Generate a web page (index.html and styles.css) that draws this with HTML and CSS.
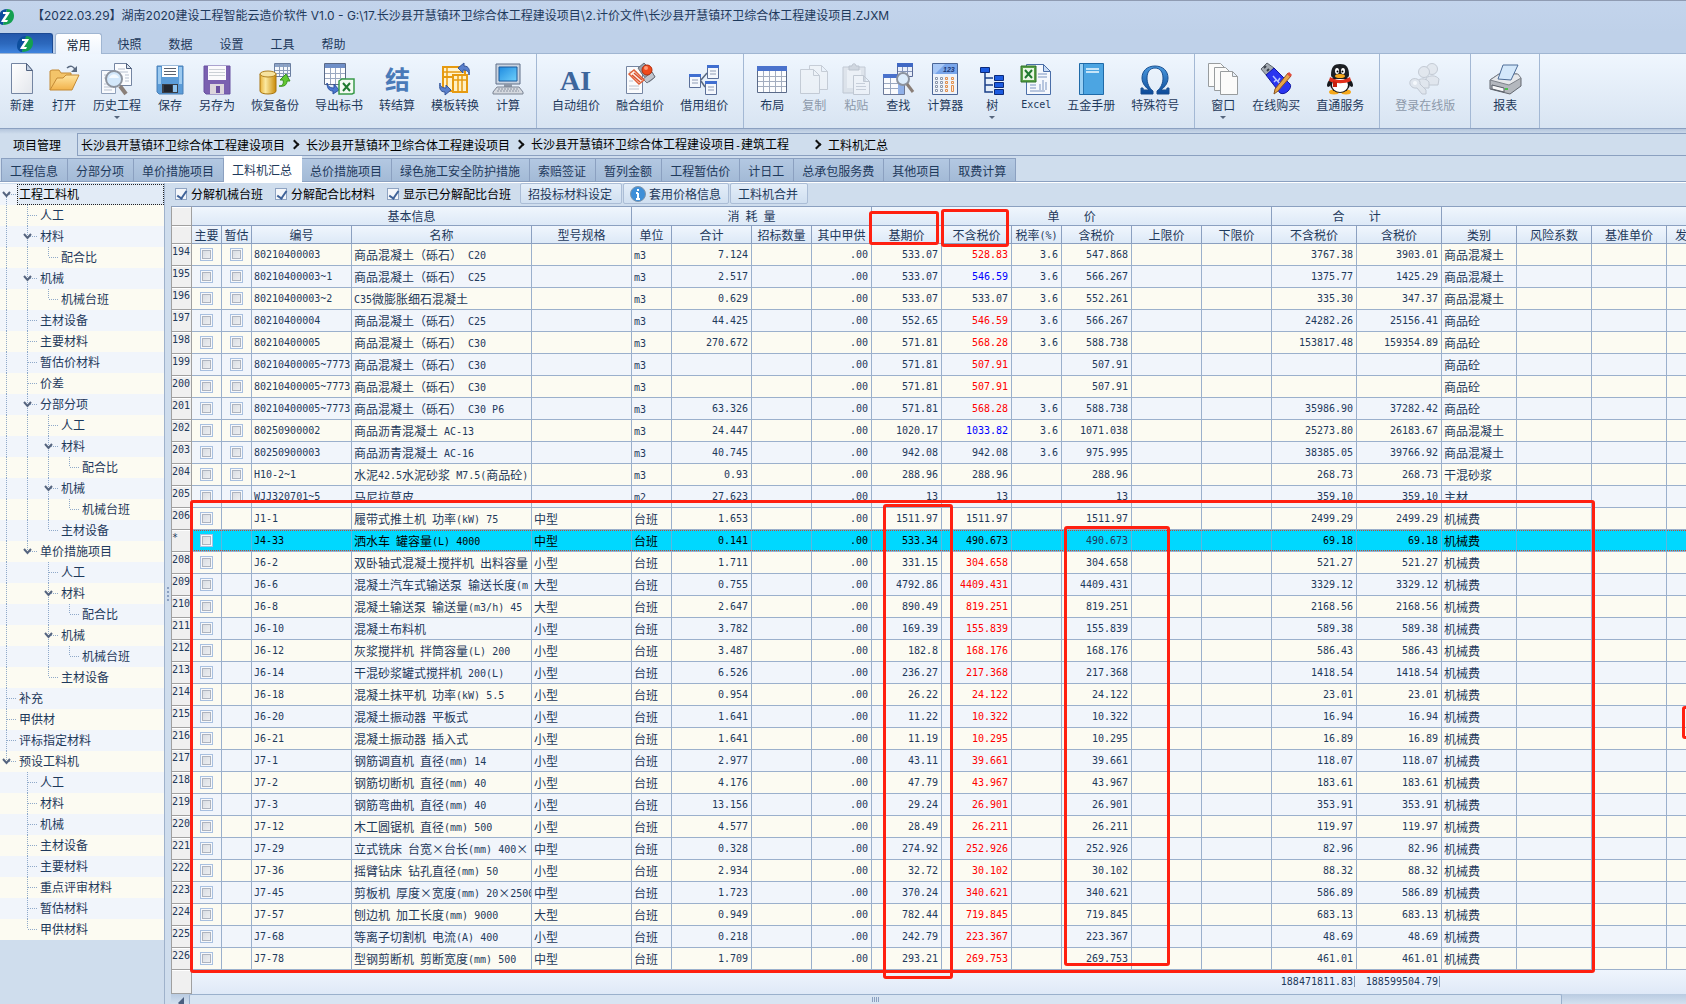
FILE: index.html
```html
<!DOCTYPE html>
<html lang="zh-CN">
<head>
  <meta charset="UTF-8">
  <title>湖南2020建设工程智能云造价软件 V1.0</title>
  <meta name="viewport" content="width=device-width, initial-scale=1.0">
  <link rel="stylesheet" href="styles.css">
</head>
<body>

  <svg class="defs" width="0" height="0">
    <defs>
      <linearGradient id="gBlue" x1="0" y1="0" x2="0" y2="1"><stop offset="0" stop-color="#4a9ae0"/><stop offset="1" stop-color="#0c4a98"/></linearGradient>
      <linearGradient id="gSky" x1="0" y1="0" x2="1" y2="1"><stop offset="0" stop-color="#1f8be0"/><stop offset="1" stop-color="#6fd0fb"/></linearGradient>
      <linearGradient id="gGold" x1="0" y1="0" x2="1" y2="0"><stop offset="0" stop-color="#e9b33a"/><stop offset=".35" stop-color="#fbe9a0"/><stop offset="1" stop-color="#c98a08"/></linearGradient>
      <linearGradient id="gPaper" x1="0" y1="0" x2="1" y2="1"><stop offset="0" stop-color="#fff"/><stop offset="1" stop-color="#e3e6ec"/></linearGradient>
      <linearGradient id="gFold" x1="0" y1="0" x2="0" y2="1"><stop offset="0" stop-color="#ffe5a0"/><stop offset="1" stop-color="#f2b24a"/></linearGradient>
      <symbol id="logo" viewBox="0 0 16 16">
        <path d="M9 0C3 0 0 5 0 10c0 4 3 6 5 6L9 0z" fill="#0d4f9e"/>
        <path d="M9 0c5 0 7 3 7 7 0 5-4 9-11 9L9 0z" fill="#14a050"/>
        <path d="M5 3h7l-1 2-4 6h3l-1 2H3l1-2 4-6H5z" fill="#fff"/>
      </symbol>
      <symbol id="xls" viewBox="0 0 16 16">
        <path d="M1 2h13v13H1z" fill="#f4fbf4" stroke="#3a9a4a" stroke-width="2"/>
        <path d="M4 5l6 7M10 5l-6 7" stroke="#1f7a30" stroke-width="2"/>
      </symbol>
      <symbol id="page" viewBox="0 0 20 24">
        <path d="M.5.5h13l6 6v17H.5z" fill="url(#gPaper)" stroke="#8d9ab0"/>
        <path d="M13.500.5v6h6z" fill="#dfe4ec" stroke="#8d9ab0"/>
      </symbol>
      <symbol id="chev" viewBox="0 0 9 7">
        <path d="M1 1l3.500 4L8 1" fill="none" stroke="#56657f" stroke-width="2"/>
      </symbol>
    </defs>
  </svg>

  <header class="titlebar">
    <svg class="title-logo"><use href="#logo"/></svg>
    <span class="title-text">【2022.03.29】湖南2020建设工程智能云造价软件 V1.0 - G:\17.长沙县开慧镇环卫综合体工程建设项目\2.计价文件\长沙县开慧镇环卫综合体工程建设项目.ZJXM</span>
  </header>

  <nav class="menu">
    <button class="app-btn"><svg width="16" height="16"><use href="#logo"/></svg></button>
    <button class="menu-tab active">常用</button>
    <button class="menu-tab">快照</button>
    <button class="menu-tab">数据</button>
    <button class="menu-tab">设置</button>
    <button class="menu-tab">工具</button>
    <button class="menu-tab">帮助</button>
  </nav>

  <div class="ribbon">
    <div class="group first">
      <button class="tool">
        <svg viewBox="0 0 32 32"><path d="M5.500.5h15l6 7v23h-21z" fill="url(#gPaper)" stroke="#7485a2"/><path d="M20.500.5v7h6z" fill="#c3d0e2" stroke="#50617e"/></svg>
        新建</button>
      <button class="tool">
        <svg viewBox="0 0 32 32"><path d="M2 27V8l2-1h7l2 3h10v5" fill="#f3c469" stroke="#c48a35"/><path d="M2 27L9 15h6l3-3h13l-7 15z" fill="url(#gFold)" stroke="#c48a35"/><path d="M19 5c3-3 7-2 8 2" fill="none" stroke="#5a6a80" stroke-width="1.500"/><path d="M29 3v6h-6z" fill="#5a6a80"/></svg>
        打开</button>
      <button class="tool">
        <svg viewBox="0 0 32 32"><path d="M13.500.5h12l5 5v17h-17z" fill="#fbfcfe" stroke="#7485a2"/><path d="M25.500.5v5h5z" fill="#dce4ef" stroke="#50617e"/><path d="M17 6h7M17 9h10M24 12h4M24 15h4M24 18h4" stroke="#b9c2d0"/><path d="M.5 7.500h14v23H.5z" fill="#f8fafd" stroke="#8fa0ba"/><path d="M3 12h3M3 15h3M3 21h4M3 24h8M3 27h8" stroke="#b9c2d0"/><circle cx="13" cy="16" r="8" fill="#d3e8fb" stroke="#8c939e" stroke-width="2"/><path d="M8 15c2-5 8-5 10 0z" fill="#f4faff"/><path d="M19 23l6 8" stroke="#8a7f78" stroke-width="4"/></svg>
        历史工程<i class="drop"></i></button>
      <button class="tool">
        <svg viewBox="0 0 32 32"><path d="M3 3h26v28H5l-2-2z" fill="#5b9cd8" stroke="#4a80b8"/><path d="M4 4h3v17H4zM25 4h3v17h-3z" fill="#9ccaf0"/><path d="M8 3h16v11H8z" fill="#fff"/><path d="M10 5.500h12M10 8.500h12M10 11.500h12" stroke="#5a626e"/><path d="M8 21h16v9H8z" fill="#3a3f48"/><path d="M10 22h8v7h-8z" fill="#22262e"/><path d="M19 22h4v7h-4z" fill="#8fc4ef"/></svg>
        保存</button>
      <button class="tool">
        <svg viewBox="0 0 32 32"><path d="M3 3h26v28H5l-2-2z" fill="#7a60b0" stroke="#6850a0"/><path d="M7 3h18v14H7z" fill="#fbfafc"/><path d="M8 6.500h16M8 9.500h16M8 12.500h16" stroke="#ccd0d6"/><path d="M9 21h14v10H9z" fill="#dcd6dc"/><path d="M15 23h4v7h-4z" fill="#6a50a0"/></svg>
        另存为</button>
      <button class="tool">
        <svg viewBox="0 0 32 32"><path d="M15.500.5h16v13h-16z" fill="#f5f8fc" stroke="#6a7ea0"/><path d="M16 1h15v3H16z" fill="#8ba3c8"/><path d="M16 7.500h15M16 10.500h15M20.500 1v12M24.500 1v12M28.500 1v12" stroke="#8b9cb8"/><path d="M1 11v17c0 4 16 4 16 0V11z" fill="url(#gGold)" stroke="#a87510"/><ellipse cx="9" cy="11" rx="8" ry="3" fill="#f6e3a0" stroke="#b08020"/><path d="M20 23c4 0 5-3 4-6h-3l6-6 4 7h-3c0 4-3 6-8 5z" fill="#62c832" stroke="#38901c"/></svg>
        恢复备份</button>
      <button class="tool">
        <svg viewBox="0 0 32 32"><path d="M1.500.5h21v21h-21z" fill="#fdfdfe" stroke="#5a6a88"/><path d="M2 1h20v4H2z" fill="#6f8fc8"/><path d="M2 10.500h20M2 15.500h20M7.500 5v16M12.500 5v16M17.500 5v16" stroke="#9aa8c0"/><path d="M4 20c1 4 4 5 7 5v-4l5 6-6 4v-3c-4 0-6-3-6-8z" fill="#4a78d0" stroke="#2c50a0"/><path d="M16 18l3-2h12v14l-2 1H16z" fill="#f3faf3" stroke="#3a9a4a" stroke-width="1.500"/><path d="M20 20l7 8M27 20l-7 8" stroke="#1f7a30" stroke-width="2"/></svg>
        导出标书</button>
      <button class="tool">
        <svg viewBox="0 0 32 32"><text x="4" y="26" class="serif-cn">结</text></svg>
        转结算</button>
      <button class="tool">
        <svg viewBox="0 0 32 32"><path d="M4 4h22v10H4zM4 14h10v14H4z" fill="#fff3cf" stroke="#e69a10" stroke-width="2"/><path d="M8 4v22M4 9h20" stroke="#e69a10" stroke-width="1.500"/><path d="M14 12h14v17H14z" fill="#fff0c4" stroke="#e69a10" stroke-width="2"/><path d="M19 12v17M23 12v17M14 17h14" stroke="#e69a10" stroke-width="1.500"/><path d="M30 12c0-4-3-5-6-5v3l-5-5 6-5v3c5 0 6 4 5 9z" fill="#5a80cc" stroke="#34559c"/><path d="M1 20c0 4 3 5 6 5v-3l5 5-6 5v-3c-5 0-6-4-5-9z" fill="#5a80cc" stroke="#34559c"/></svg>
        模板转换</button>
      <button class="tool">
        <svg viewBox="0 0 32 32"><path d="M4 1h24v20H4z" fill="#c9d3e0" stroke="#5f6f88"/><path d="M7 4h18v14H7z" fill="url(#gSky)" stroke="#1c5a9c"/><path d="M12 21h8v3h-8z" fill="#8d97a6"/><path d="M5 24h22l4 5v2H1v-2z" fill="#d5d9df" stroke="#7b8494"/><path d="M6 26h20M5 28h22" stroke="#8a92a0" stroke-dasharray="2 1"/></svg>
        计算</button>
    </div>
    <div class="group">
      <button class="tool"><svg viewBox="0 0 32 32"><text x="0" y="27" class="serif-ai">AI</text></svg>自动组价</button>
      <button class="tool">
        <svg viewBox="0 0 32 32"><path d="M2.500 3.500h16v27h-16z" fill="#fafbfd" stroke="#7485a2"/><path d="M5 9h8M5 23h10M5 26h10M5 18h4" stroke="#bcc4d0"/><path d="M14 5l6-5 5 5 6 9-6 5-7-8z" fill="#9aa0aa" stroke="#6b717c"/><path d="M19 16l9-7 3 5-8 6z" fill="#c0c5ce" stroke="#6d737e"/><path d="M5 11l5-4 10 10-5 4z" fill="#fbeee8" stroke="#e06038" stroke-width="1.500"/><path d="M8 12l8 7M10 10l8 7" stroke="#d9502c" stroke-width="1.500"/><circle cx="23" cy="7" r="5" fill="#ef4a1c" stroke="#b22c0a"/><circle cx="22" cy="5" r="2" fill="#ff9a78"/></svg>
        融合组价</button>
      <button class="tool">
        <svg viewBox="0 0 32 32"><g fill="#f4f7fc" stroke="#5b6f98"><path d="M1.500 11.500h11v13h-11zM19.500 2.500h11v13h-11zM17.500 18.500h11v13h-11z"/></g><path d="M1 11h12v3H1zM19 2h12v3H19zM17 18h12v3H17z" fill="#3f6ed0"/><path d="M4 17h6M4 20h6M22 8h6M22 11h6M20 24h6M20 27h6" stroke="#8f9cb5"/><path d="M13 17l6-7M13 18l4 6" stroke="#58677f" stroke-width="1.500"/></svg>
        借用组价</button>
    </div>
    <div class="group">
      <button class="tool">
        <svg viewBox="0 0 32 32"><path d="M1.500 3.500h29v26h-29z" fill="#fcfdfe" stroke="#5a6a88"/><path d="M1 3h30v5H1z" fill="#4a72cc"/><path d="M2 13.500h28M2 18.500h28M2 23.500h28M7.500 8v21M13.500 8v21M19.500 8v21M25.500 8v21" stroke="#a3adbf"/></svg>
        布局</button>
      <button class="tool" disabled>
        <svg viewBox="0 0 32 32" opacity=".5"><g fill="#f1f3f6" stroke="#a3a9b3"><path d="M11.500 2.500h12l6 6v18h-18zM23.500 2.500v6h6"/><path d="M2.500 6.500h13l6 6v18h-19zM15.500 6.500v6h6"/></g></svg>
        复制</button>
      <button class="tool" disabled>
        <svg viewBox="0 0 32 32" opacity=".5"><path d="M3 4h22v26H3z" fill="#d4d8de" stroke="#9ba2ae"/><path d="M7 7h14v18H7z" fill="#eef0f3"/><path d="M9 3h3c0-3 4-3 4 0h3v4H9z" fill="#b6bcc6" stroke="#8f96a2"/><path d="M13.500 12.500h10l6 6v13h-16zM23.500 12.500v6h6" fill="#f4f5f8" stroke="#9ba2ae"/><path d="M16 20.500h9M16 23.500h10M16 26.500h10" stroke="#a9b0bc"/></svg>
        粘贴</button>
      <button class="tool">
        <svg viewBox="0 0 32 32"><path d="M15.500.5h15v13h-15z" fill="#e9effa" stroke="#5a6a98"/><path d="M15 0h16v4H15z" fill="#3f68c4"/><path d="M20.500 4v9M25.500 4v9M16 8.500h14" stroke="#8595b8"/><path d="M1.500 11.500h21v20h-21z" fill="#fafbfd" stroke="#6a7898"/><path d="M1 11h15v4H1z" fill="#4a72cc"/><path d="M16 14h6v17h-6z" fill="#8fb0e8"/><path d="M2 20.500h14M2 25.500h14M8.500 15v16" stroke="#9aa8c0"/><circle cx="21" cy="16" r="6" fill="#dcecfb" stroke="#8c939e" stroke-width="2"/><path d="M25 21l6 8" stroke="#8a7f78" stroke-width="3"/></svg>
        查找</button>
      <button class="tool">
        <svg viewBox="0 0 32 32"><path d="M3.500.5h25v31h-25z" fill="#eef3fa" stroke="#4a6698"/><path d="M4 1h24v10H4z" fill="#7aa6ea"/><path d="M4 1h12L6 11H4z" fill="#a8c8f6"/><text x="14" y="9" class="calc">123</text><g fill="#fff" stroke="#8a96aa"><path d="M6.500 14.500h2v2h-2zM11.500 14.500h2v2h-2zM6.500 18.500h2v2h-2zM11.500 18.500h2v2h-2zM6.500 22.500h2v2h-2zM11.500 22.500h2v2h-2zM6.500 26.500h2v2h-2zM11.500 26.500h2v2h-2z"/></g><g fill="#ffe9d8" stroke="#e09050"><path d="M16.500 14.500h2v2h-2zM22.500 14.500h2v2h-2zM16.500 18.500h2v2h-2zM22.500 18.500h2v2h-2zM16.500 22.500h2v2h-2zM16.500 26.500h2v2h-2zM22.500 22.500h2v6h-2z"/></g></svg>
        计算器</button>
      <button class="tool">
        <svg viewBox="0 0 32 32"><path d="M9 9v20h8M9 15h8M9 22h8" fill="none" stroke="#1a3f88" stroke-width="1.500"/><g fill="#1c5be0" stroke="#0c2a78"><path d="M4.500 4.500h9v5h-9zM18.500 12.500h9v5h-9zM18.500 19.500h9v5h-9zM18.500 26.500h9v5h-9z"/></g></svg>
        树<i class="drop"></i></button>
      <button class="tool">
        <svg viewBox="0 0 32 32"><path d="M6.500 1.500h17l7 7v23h-24z" fill="#f5f8fd" stroke="#4a6ea8"/><path d="M23.500 1.500v7h7z" fill="#c9dcf5" stroke="#4a6ea8"/><path d="M18 11h9M18 14h9M10 22h6M10 25h6M10 28h15M20 27v-6M23 27V17M26 27v-8" stroke="#7a94c0"/><path d="M1 3h15v16H1z" fill="#58a048" stroke="#2c7024"/><path d="M3 5h11v12H3z" fill="#e9f6e4"/><path d="M5 7l7 8M12 7l-7 8" stroke="#1f7a30" stroke-width="2"/></svg>
        <span class="lat">Excel</span></button>
      <button class="tool">
        <svg viewBox="0 0 32 32"><path d="M4.500.5h24v31h-24z" fill="#4ca5e2" stroke="#1f6aa8"/><path d="M5 1h3v30H5z" fill="#9ad0f4"/><path d="M8.500 1v30" stroke="#2a78b4"/><path d="M11 6h13M11 9h13" stroke="#f0faff" stroke-width="1.500"/></svg>
        五金手册</button>
      <button class="tool">
        <svg viewBox="0 0 32 32"><path d="M2 31v-6h2c0 2 1 2 3 2h3C5 23 3 19 3 15 3 8 8 3 16 3s13 5 13 12c0 4-2 8-7 12h3c2 0 3 0 3-2h2v6H18v-3c4-3 6-8 6-13 0-6-3-10-8-10s-8 4-8 10c0 5 2 10 6 13v3z" fill="url(#gBlue)" stroke="#1a4f90"/></svg>
        特殊符号</button>
    </div>
    <div class="group">
      <button class="tool">
        <svg viewBox="0 0 32 32"><g fill="#fbfbfa" stroke="#989c9e"><path d="M1.500.5h12l5 5v18h-17z"/><path d="M7.500 4.500h11l6 6v17h-17z"/><path d="M13.500 8.500h12l5 5v18h-17zM25.500 8.500v5h5"/></g></svg>
        窗口<i class="drop"></i></button>
      <button class="tool">
        <svg viewBox="0 0 32 32"><path d="M1 6l6-6 7 5-7 8z" fill="#a3aab2" stroke="#5b626c"/><path d="M4 5l2-2M7 8l2-2" stroke="#3b424c" stroke-width="2"/><path d="M6 12l8-7 16 16c3 4-5 12-10 9z" fill="#2a35f0" stroke="#1218a0"/><path d="M13 13l8 9M14 19l2-2M20 15l-2 3" stroke="#b8c4ff" stroke-width="1.500"/><path d="M14 31l1-5L28 10l3 3-13 15z" fill="#e8a54a" stroke="#8a5420"/><path d="M28 10l3 3" stroke="#e24c3c" stroke-width="3"/></svg>
        在线购买</button>
      <button class="tool">
        <svg viewBox="0 0 32 32"><path d="M7 15c-4 4-5 8-3 9 2 0 3-3 3-3zM25 15c4 4 5 8 3 9-2 0-3-3-3-3z" fill="#16181c"/><ellipse cx="10" cy="29" rx="5" ry="2.500" fill="#f5a81c"/><ellipse cx="22" cy="29" rx="5" ry="2.500" fill="#f5a81c"/><ellipse cx="16" cy="21" rx="10" ry="9" fill="#16181c"/><ellipse cx="16" cy="22" rx="8" ry="7" fill="#fff"/><path d="M7 12C7 4 10 1 16 1s9 3 9 11c0 2-2 4-9 4s-9-2-9-4z" fill="#1c1f24"/><ellipse cx="13" cy="8" rx="2" ry="3" fill="#fff"/><ellipse cx="19" cy="8" rx="2" ry="3" fill="#fff"/><circle cx="13.500" cy="8.500" r="1"/><circle cx="18.500" cy="8.500" r="1"/><ellipse cx="16" cy="13" rx="5" ry="2" fill="#f7a91c"/><path d="M6 14c6 4 14 4 20 0l1 4c-6 3-16 3-22 0z" fill="#e3301c"/><path d="M9 18l4 1v5H9z" fill="#c9200f"/></svg>
        直通服务</button>
    </div>
    <div class="group">
      <button class="tool" disabled>
        <svg viewBox="0 0 32 32" opacity=".6"><g fill="#dde1e7" stroke="#aab0ba"><path d="M17 15c4-3 10-3 13 1l-1 6H18z"/><circle cx="23" cy="6" r="5.500"/><path d="M8 18c3-3 9-3 12 1v6H9z"/><circle cx="15" cy="9" r="5.500"/><path d="M2 17c3-3 10-1 9 4l6 6v4h-4l-5-6c-6 1-9-5-6-8z"/></g><circle cx="6" cy="20" r="2" fill="#fff"/></svg>
        登录在线版</button>
    </div>
    <div class="group">
      <button class="tool wide">
        <svg viewBox="0 0 32 32"><path d="M1 17l9-6h18l4 4v8l-11 8L1 26z" fill="#b4b8be" stroke="#62676f"/><path d="M1 17l19 5 12-7-3-4H10z" fill="#e6e8eb" stroke="#7d828a"/><path d="M9 16l5-14 15 0-7 15z" fill="#d4e8fb" stroke="#4c6c98"/><path d="M3 22l12 3v4L3 26z" fill="#f8f9fa" stroke="#555b64"/><path d="M16 25h3v2h-3z" fill="#4cc050"/></svg>
        报表</button>
    </div>
  </div>

  <div class="crumb-row">
    <span class="crumb-label">项目管理</span>
    <nav class="crumbs">
      <a href="#">长沙县开慧镇环卫综合体工程建设项目</a><i class="arrow"></i>
      <a href="#">长沙县开慧镇环卫综合体工程建设项目</a><i class="arrow"></i>
      <a href="#" class="gap">长沙县开慧镇环卫综合体工程建设项目<span class="lat">-</span>建筑工程</a><i class="arrow"></i>
      <a href="#">工料机汇总</a>
    </nav>
  </div>

  <nav class="tabs">
    <button>工程信息</button><button>分部分项</button><button>单价措施项目</button><button class="active">工料机汇总</button><button>总价措施项目</button><button>绿色施工安全防护措施</button><button>索赔签证</button><button>暂列金额</button><button>工程暂估价</button><button>计日工</button><button>总承包服务费</button><button>其他项目</button><button>取费计算</button>
  </nav>

  <main class="main">
    <aside class="side"><div class="tree" id="tree"></div></aside>
    <div class="splitter"><i></i></div>

    <section class="content">
      <div class="toolbar">
        <label><input type="checkbox" checked>分解机械台班</label>
        <label><input type="checkbox" checked>分解配合比材料</label>
        <label><input type="checkbox" checked>显示已分解配比台班</label>
        <div class="btns">
          <button>招投标材料设定</button>
          <button class="with-icon"><svg width="16" height="16" viewBox="0 0 16 16"><circle cx="8" cy="8" r="7.500" fill="#3f8fd8" stroke="#7d94ac"/><path d="M8 3v2M8 7v6M6 7h2M6 13h4" stroke="#fff" stroke-width="2"/></svg>套用价格信息</button>
          <button>工料机合并</button>
        </div>
      </div>

      <div class="sheet">
        <table>
          <colgroup id="cols"></colgroup>
          <thead>
            <tr>
              <th class="idx"></th>
              <th colspan="5">基本信息</th>
              <th colspan="4">消<span class="lat"> </span>耗<span class="lat"> </span>量</th>
              <th colspan="6">单<span class="lat">    </span>价</th>
              <th colspan="2">合<span class="lat">    </span>计</th>
              <th colspan="4"></th>
            </tr>
            <tr id="heads"></tr>
          </thead>
          <tbody id="rows"></tbody>
          <tfoot>
            <tr>
              <td class="idx"></td>
              <td colspan="15"></td>
              <td class="num"><span class="sum">188471811.83</span></td>
              <td class="num"><span class="sum">188599504.79</span></td>
              <td colspan="4"></td>
            </tr>
          </tfoot>
        </table>

        <!-- 红框标注 -->
        <div class="mark m-base"></div>
        <div class="mark m-net"></div>
        <div class="mark m-rows"></div>
        <div class="mark m-basecol"></div>
        <div class="mark m-taxcol"></div>
        <div class="mark m-edge"></div>
      </div>
      <div class="hscroll"><i class="left"></i><div class="thumb"><i></i></div></div>
    </section>
  </main>

  <script src="script.js"></script>
</body>
</html>
```

FILE: styles.css
```css
* {
  box-sizing: border-box;
}

body {
  margin: 0;
  height: 100vh;
  display: flex;
  flex-direction: column;
  overflow: hidden;
  background: #cfdded;
  color: #1e395b;
  font: 12px/14px "Noto Sans CJK SC", sans-serif;
}

button {
  font: inherit;
  color: inherit;
  margin: 0;
  padding: 0;
  border: 0;
  background: none;
  white-space: nowrap;
}

.defs {
  position: absolute;
}

/* 半角字符 */
.lat,
.num {
  font-family: "DejaVu Sans Mono", monospace;
  font-size: 10px;
  white-space: pre;
}

/* 标题栏 */
.titlebar {
  flex: none;
  height: 32px;
  display: flex;
  align-items: center;
  border-top: 1px solid #8f9bb2;
  background: linear-gradient(#c3d4ec, #bfd1e9);
}

.title-logo {
  width: 16px;
  height: 16px;
  margin-left: -2px;
}

.title-text {
  margin-left: 18px;
  padding-bottom: 2px;
  font-family: Inter, "Noto Sans CJK SC", sans-serif;
  white-space: nowrap;
}

.menu {
  flex: none;
  height: 22px;
  display: flex;
  padding-top: 1px;
  background: #bfd1e9;
  border-bottom: 1px solid #a0b6d2;
}

.app-btn {
  width: 53px;
  margin-right: 2px;
  border: 1px solid #1c4a94;
  border-left: 0;
  border-bottom: 0;
  border-radius: 0 3px 0 0;
  background: linear-gradient(#2458ac, #2c68bc 50%, #3f84de);
}

.app-btn svg {
  display: block;
  margin: 1px auto 0 17px;
}

.menu-tab {
  width: 51px;
  padding-top: 1px;
}

.menu-tab.active {
  width: 47px;
  height: 21px;
  margin-right: 2px;
  border: 1px solid #a0b6d2;
  border-bottom: 0;
  border-radius: 3px 3px 0 0;
  background: linear-gradient(#fff, #eef5fd);
  color: #0c1c34;
}

/* 功能区 */
.ribbon {
  flex: none;
  height: 75px;
  display: flex;
  background: linear-gradient(#eff6fe, #d8e4f2);
  border-bottom: 1px solid #8ba0c0;
}

.group {
  display: flex;
  padding: 0 7px;
  border-right: 1px solid #a3b8d4;
}

.group.first {
  padding-left: 1px;
}

.tool {
  display: flex;
  flex-direction: column;
  align-items: center;
  min-width: 42px;
  padding: 9px 8px 0;
}

.tool.wide {
  min-width: 54px;
}

.tool svg {
  width: 32px;
  height: 32px;
  margin: 0 -8px 3px;
  overflow: visible;
}

.tool:disabled {
  color: #8d99aa;
}

.drop {
  margin-top: 4px;
  border: 3px solid transparent;
  border-top-color: #55657c;
  border-bottom: 0;
}

.serif-cn {
  font: bold 25px "Noto Sans CJK SC", sans-serif;
  fill: #4a7ab8;
}

.serif-ai {
  font: bold 28px "Liberation Serif", serif;
  fill: #3d669c;
}

.calc {
  font: italic bold 7px "Liberation Sans", sans-serif;
  fill: #1c3a78;
}

/* 导航路径 */
.crumb-row {
  flex: none;
  height: 27px;
  padding-top: 4px;
  display: flex;
  color: #000;
  background: linear-gradient(#b4c5dc, #cfdded 5px);
}

.crumb-label {
  width: 77px;
  padding-left: 13px;
  line-height: 24px;
}

.crumbs {
  flex: 1;
  display: flex;
  align-items: center;
  height: 23px;
  padding-left: 3px;
  border: 1px solid #8ba0c0;
  border-right: 0;
  background: #cfdded;
  white-space: nowrap;
}

.crumbs a {
  color: #000;
  text-decoration: none;
}

.crumbs .gap {
  padding-right: 18px;
}

.arrow {
  width: 7px;
  height: 7px;
  margin: 0 8px 0 6px;
  border: 1px solid #111;
  border-width: 2px 2px 0 0;
  transform: rotate(45deg);
}

.tabs {
  flex: none;
  height: 27px;
  display: flex;
  align-items: flex-end;
  padding-left: 1px;
  border-bottom: 1px solid #fff;
  box-shadow: inset 0 -1px #8ba0c0;
}

.tabs button {
  height: 24px;
  padding: 1px 9px 0 8px;
  border: 1px solid #8ba0c0;
  border-width: 1px 1px 1px 0;
  background: linear-gradient(#b3c8e2, #a3bad6);
}

.tabs button:first-child {
  border-left-width: 1px;
}

.tabs .active {
  height: 26px;
  background: #fff;
  border-color: #fff;
}

/* 主体 */
.main {
  flex: 1;
  min-height: 0;
  display: flex;
}

.side {
  flex: none;
  width: 165px;
  padding-top: 1px;
  border-right: 1px solid #9fb2cb;
  overflow: hidden;
}

.tree {
  background: repeating-linear-gradient(#f1f5fb 0 21px, #fcfbf2 21px 42px);
}

.node {
  display: flex;
  height: 21px;
  margin-left: -4px;
  line-height: 20px;
}

.guide {
  --v: repeating-linear-gradient(#8fa9c9 0 1px, transparent 1px 2px);
  --h: repeating-linear-gradient(90deg, #8fa9c9 0 1px, transparent 1px 2px);
  width: 21px;
  padding: 7px 0 0 6px;
  background-repeat: no-repeat;
}

.guide.line {
  background-image: var(--v);
  background-position: 10px 0;
  background-size: 1px 100%;
}

.guide.tee,
.guide.elbow,
.guide.top {
  background-image: var(--v), var(--h);
  background-position: 10px 0, 11px 10px;
  background-size: 1px 100%, 9px 1px;
}

.guide.elbow {
  background-size: 1px 10px, 9px 1px;
}

.guide.top {
  background-position: 10px 11px, 11px 10px;
}

.guide button,
.guide svg {
  display: block;
  width: 9px;
  height: 7px;
}

.node .name {
  padding-left: 2px;
  white-space: nowrap;
}

.node.selected .name {
  flex: 1;
  line-height: 18px;
  padding-left: 1px;
  border: 1px dotted #222;
  background: #e2ebf6;
  color: #000;
}

.splitter {
  flex: none;
  width: 6px;
  display: flex;
  align-items: center;
  justify-content: center;
}

.splitter i {
  width: 2px;
  height: 14px;
  background: repeating-linear-gradient(#8ba0c0 0 2px, transparent 2px 4px);
}

.content {
  flex: 1;
  min-width: 0;
  display: flex;
  flex-direction: column;
}

.toolbar {
  flex: none;
  height: 23px;
  display: flex;
  align-items: center;
  padding: 0 0 2px 4px;
  color: #000;
}

.toolbar label {
  display: flex;
  align-items: center;
  gap: 4px;
  margin-right: 12px;
}

.toolbar label:last-of-type {
  margin-right: 9px;
}

input[type=checkbox] {
  appearance: none;
  display: block;
  width: 13px;
  height: 13px;
  margin: 0 auto;
  border: 1px solid #a8c0e0;
  background: linear-gradient(135deg, #d5d9df, #f2f3f5);
  box-shadow: inset 0 0 0 1px #f8f9fb, inset 0 0 0 2px #aeb4bf;
}

.toolbar input {
  width: 12px;
  height: 12px;
  background: #f4f6fa;
  box-shadow: none;
  border-color: #8ea3c2;
}

.toolbar input::before {
  content: "";
  display: block;
  width: 4px;
  height: 8px;
  margin: 0 0 0 3px;
  border: 2px solid #3f6298;
  border-width: 0 2px 2px 0;
  transform: rotate(35deg);
}

.btns {
  display: flex;
  gap: 1px;
}

.btns button {
  height: 21px;
  display: flex;
  align-items: center;
  gap: 4px;
  padding: 0 9px 0 7px;
  border: 1px solid #abbdd6;
  border-radius: 2px;
  background: linear-gradient(#e4eef9, #d0dff0);
  color: #1e395b;
}

.btns .with-icon {
  gap: 3px;
  padding: 0 7px 0 6px;
}

/* 表格 */
.sheet {
  flex: 1;
  min-height: 0;
  position: relative;
  overflow: hidden;
}

table {
  width: 1572px;
  table-layout: fixed;
  border-collapse: separate;
  border-spacing: 0;
}

th,
td {
  padding: 0 3px 0 2px;
  border-right: 1px solid #9bb0cc;
  border-bottom: 1px solid #9bb0cc;
  overflow: hidden;
  white-space: nowrap;
}

th {
  height: 18px;
  padding: 0;
  line-height: 14px;
  font-weight: normal;
  background: linear-gradient(#f0f6fd, #dde9f7);
  border-color: #8ba0c0;
}

thead tr:first-child th {
  height: 20px;
  border-top: 1px solid #8ba0c0;
}

thead tr + tr th:last-child {
  padding-left: 8px;
  text-align: left;
}

td {
  height: 22px;
  line-height: 18px;
}

tbody tr {
  background: #f1f5fb;
}

tbody tr:nth-child(odd) {
  background: #fcfbf2;
}

td.num {
  text-align: right;
}

td.code {
  text-align: left;
}

td .lat,
th .lat {
  line-height: 12px;
  vertical-align: 1px;
}

tr .idx {
  padding: 0;
  border: 1px solid #a0a0a0;
  border-top: 0;
  background: #f0f0f0;
  box-shadow: inset 0 1px #fff;
}

tbody .idx {
  padding-top: 2px;
  line-height: 12px;
  text-align: left;
  vertical-align: top;
}

.red {
  color: #f00;
}

.blue {
  color: #00f;
}

tbody tr.current {
  background: #00d8ff;
  color: #000;
}

.current td:not(.idx) {
  border-right-color: #5fb6dd;
  background: repeating-linear-gradient(90deg, #d04030 0 1px, transparent 1px 2px) 0 0 / 100% 1px no-repeat,
    repeating-linear-gradient(90deg, #d04030 0 1px, transparent 1px 2px) 0 100% / 100% 1px no-repeat;
}

.current .idx,
.current .gross {
  color: #1e395b;
}

tfoot td {
  height: 24px;
  border: 0;
  background: linear-gradient(#eff5fd, #dfe9f7);
}

tfoot td.num {
  padding-right: 2px;
}

tfoot .sum {
  padding-right: 1px;
  border-right: 1px solid #7f93b0;
}

.mark {
  position: absolute;
  border: 3px solid #ff2010;
  border-radius: 3px;
}

.m-base { left: 698px; top: 5px; width: 70px; height: 34px; }
.m-net { left: 770px; top: 3px; width: 68px; height: 38px; }
.m-rows { left: 19px; top: 294px; width: 1405px; height: 473px; }
.m-basecol { left: 712px; top: 298px; width: 70px; height: 475px; }
.m-taxcol { left: 893px; top: 320px; width: 106px; height: 440px; }
.m-edge { left: 1511px; top: 500px; width: 40px; height: 33px; }

.hscroll {
  flex: none;
  height: 10px;
  display: flex;
  background: linear-gradient(#b9cbe1, #d3e0ef);
}

.hscroll .left {
  margin: 3px 5px 0 7px;
  border: 6px solid transparent;
  border-right-color: #4a5f80;
  border-left: 0;
}

.thumb {
  flex: none;
  width: 90.6%;
  display: flex;
  justify-content: center;
  align-items: center;
  border: 1px solid #9ab0cc;
  border-bottom: 0;
  border-radius: 2px 2px 0 0;
  background: #d8e4f2;
}

.thumb i {
  width: 7px;
  height: 5px;
  background: repeating-linear-gradient(90deg, #8ba0c0 0 1px, transparent 1px 2px);
}
```

FILE: script.js
```js
// 层级 名称，+ 表示可展开
const treeData = `0+工程工料机
1 人工
1+材料
2 配合比
1+机械
2 机械台班
1 主材设备
1 主要材料
1 暂估价材料
1 价差
1+分部分项
2 人工
2+材料
3 配合比
2+机械
3 机械台班
2 主材设备
1+单价措施项目
2 人工
2+材料
3 配合比
2+机械
3 机械台班
2 主材设备
0 补充
0 甲供材
0 评标指定材料
0+预设工料机
1 人工
1 材料
1 机械
1 主材设备
1 主要材料
1 重点评审材料
1 暂估材料
1 甲供材料`.split('\n').map(s => ({ level: +s[0], open: s[1] === '+', name: s.slice(2) }));

function hasNext(i, level) {
  for (let j = i + 1; j < treeData.length; j++) {
    if (treeData[j].level < level) return false;
    if (treeData[j].level === level) return true;
  }
  return false;
}

document.getElementById('tree').innerHTML = treeData.map((n, i) => {
  let html = '';
  for (let k = 0; k < n.level; k++) {
    html += `<span class="guide ${hasNext(i, k) ? 'line' : ''}"></span>`;
  }
  const kind = i === 0 ? 'top' : hasNext(i, n.level) ? 'tee' : 'elbow';
  const toggle = n.open ? '<button><svg><use href="#chev"/></svg></button>' : '';
  html += `<span class="guide ${kind}">${toggle}</span><span class="name">${n.name}</span>`;
  return `<div class="node ${i === 0 ? 'selected' : ''}">${html}</div>`;
}).join('');

const heads = ['主要', '暂估', '编号', '名称', '型号规格', '单位', '合计', '招标数量', '其中甲供', '基期价', '不含税价', '税率(%)', '含税价', '上限价', '下限价', '不含税价', '含税价', '类别', '风险系数', '基准单价', '发'];
const widths = [21, 30, 30, 100, 180, 100, 40, 80, 60, 60, 70, 70, 50, 70, 70, 70, 85, 85, 75, 75, 75, 76];

// 半角部分用等宽字体
const mix = s => s.replace(/[\x20-\x7e]+/g, m => `<span class="lat">${m}</span>`);

document.getElementById('cols').innerHTML = widths.map(w => `<col style="width:${w}px">`).join('');
document.getElementById('heads').innerHTML = '<th class="idx"></th>' + heads.map(h => `<th>${mix(h)}</th>`).join('');

// 序号|编号|名称|型号|单位|合计|基期价|不含税价|税率|含税价|不含税合计|含税合计|类别
const rows = `194|80210400003|商品混凝土（砾石） C20||m3|7.124|533.07|r528.83|3.6|547.868|3767.38|3903.01|商品混凝土
195|80210400003~1|商品混凝土（砾石） C25||m3|2.517|533.07|b546.59|3.6|566.267|1375.77|1425.29|商品混凝土
196|80210400003~2|C35微膨胀细石混凝土||m3|0.629|533.07|533.07|3.6|552.261|335.30|347.37|商品混凝土
197|80210400004|商品混凝土（砾石） C25||m3|44.425|552.65|r546.59|3.6|566.267|24282.26|25156.41|商品砼
198|80210400005|商品混凝土（砾石） C30||m3|270.672|571.81|r568.28|3.6|588.738|153817.48|159354.89|商品砼
199|80210400005~7773|商品混凝土（砾石） C30||m3||571.81|r507.91||507.91|||商品砼
200|80210400005~7773|商品混凝土（砾石） C30||m3||571.81|r507.91||507.91|||商品砼
201|80210400005~7773|商品混凝土（砾石） C30 P6||m3|63.326|571.81|r568.28|3.6|588.738|35986.90|37282.42|商品砼
202|80250900002|商品沥青混凝土 AC-13||m3|24.447|1020.17|b1033.82|3.6|1071.038|25273.80|26183.67|商品混凝土
203|80250900003|商品沥青混凝土 AC-16||m3|40.745|942.08|942.08|3.6|975.995|38385.05|39766.92|商品混凝土
204|H10-2~1|水泥42.5水泥砂浆 M7.5(商品砼)||m3|0.93|288.96|288.96||288.96|268.73|268.73|干混砂浆
205|WJJ320701~5|马尼拉草皮||m2|27.623|13|13||13|359.10|359.10|主材
206|J1-1|履带式推土机 功率(kW) 75|中型|台班|1.653|1511.97|1511.97||1511.97|2499.29|2499.29|机械费
*|J4-33|洒水车 罐容量(L) 4000|中型|台班|0.141|533.34|490.673||490.673|69.18|69.18|机械费
208|J6-2|双卧轴式混凝土搅拌机 出料容量|小型|台班|1.711|331.15|r304.658||304.658|521.27|521.27|机械费
209|J6-6|混凝土汽车式输送泵 输送长度(m|大型|台班|0.755|4792.86|r4409.431||4409.431|3329.12|3329.12|机械费
210|J6-8|混凝土输送泵 输送量(m3/h) 45|大型|台班|2.647|890.49|r819.251||819.251|2168.56|2168.56|机械费
211|J6-10|混凝土布料机|小型|台班|3.782|169.39|r155.839||155.839|589.38|589.38|机械费
212|J6-12|灰浆搅拌机 拌筒容量(L) 200|小型|台班|3.487|182.8|r168.176||168.176|586.43|586.43|机械费
213|J6-14|干混砂浆罐式搅拌机 200(L)|小型|台班|6.526|236.27|r217.368||217.368|1418.54|1418.54|机械费
214|J6-18|混凝土抹平机 功率(kW) 5.5|小型|台班|0.954|26.22|r24.122||24.122|23.01|23.01|机械费
215|J6-20|混凝土振动器 平板式|小型|台班|1.641|11.22|r10.322||10.322|16.94|16.94|机械费
216|J6-21|混凝土振动器 插入式|小型|台班|1.641|11.19|r10.295||10.295|16.89|16.89|机械费
217|J7-1|钢筋调直机 直径(mm) 14|小型|台班|2.977|43.11|r39.661||39.661|118.07|118.07|机械费
218|J7-2|钢筋切断机 直径(mm) 40|小型|台班|4.176|47.79|r43.967||43.967|183.61|183.61|机械费
219|J7-3|钢筋弯曲机 直径(mm) 40|小型|台班|13.156|29.24|r26.901||26.901|353.91|353.91|机械费
220|J7-12|木工圆锯机 直径(mm) 500|小型|台班|4.577|28.49|r26.211||26.211|119.97|119.97|机械费
221|J7-29|立式铣床 台宽×台长(mm) 400×|中型|台班|0.328|274.92|r252.926||252.926|82.96|82.96|机械费
222|J7-36|摇臂钻床 钻孔直径(mm) 50|小型|台班|2.934|32.72|r30.102||30.102|88.32|88.32|机械费
223|J7-45|剪板机 厚度×宽度(mm) 20×2500|中型|台班|1.723|370.24|r340.621||340.621|586.89|586.89|机械费
224|J7-57|刨边机 加工长度(mm) 9000|大型|台班|0.949|782.44|r719.845||719.845|683.13|683.13|机械费
225|J7-68|等离子切割机 电流(A) 400|小型|台班|0.218|242.79|r223.367||223.367|48.69|48.69|机械费
226|J7-78|型钢剪断机 剪断宽度(mm) 500|中型|台班|1.709|293.21|r269.753||269.753|461.01|461.01|机械费`;

const check = '<input type="checkbox">';
const num = (v, cls = '') => `<td class="num ${cls}">${v}</td>`;

document.getElementById('rows').innerHTML = rows.split('\n').map((line, i) => {
  const [idx, code, name, spec, unit, qty, base, net, rate, gross, netSum, grossSum, cat] = line.split('|');
  const color = { r: 'red', b: 'blue' }[net[0]] || '';
  return `<tr class="${idx === '*' ? 'current' : ''}">
    <td class="num idx">${idx}</td>
    <td>${check}</td>
    <td>${i < 12 ? check : ''}</td>
    ${num(code, 'code')}
    <td>${mix(name)}</td>
    <td>${spec}</td>
    <td>${mix(unit)}</td>
    ${num(qty)}
    <td></td>
    ${num('.00')}
    ${num(base)}
    ${num(net.replace(/^[rb]/, ''), color)}
    ${num(rate)}
    ${num(gross, 'gross')}
    <td></td>
    <td></td>
    ${num(netSum)}
    ${num(grossSum)}
    <td>${cat}</td>
    <td></td>
    <td></td>
    <td></td>
  </tr>`;
}).join('');
```
